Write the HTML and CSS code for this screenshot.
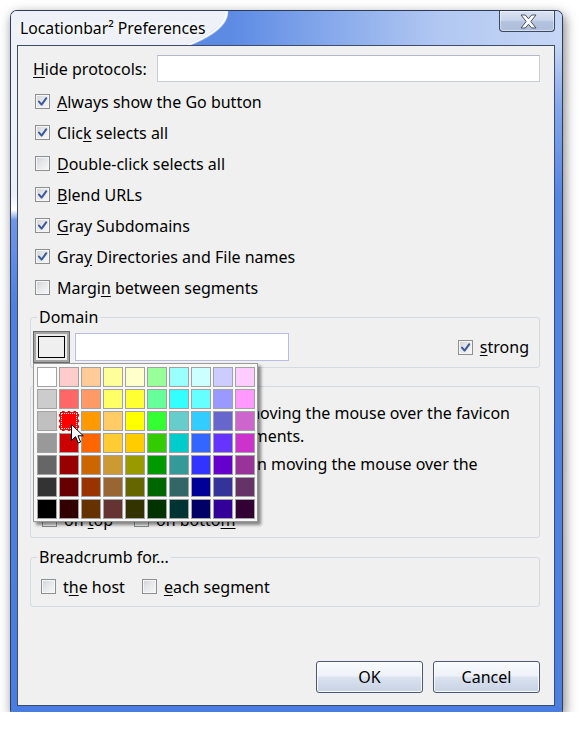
FILE: index.html
```html
<!DOCTYPE html>
<html>
<head>
<meta charset="utf-8">
<title>Locationbar² Preferences</title>
<link rel="stylesheet" href="styles.css">
</head>
<body>
<div class="window">
  <div class="titlebar">
    <div class="glass"></div>
    <span class="title">Locationbar² Preferences</span>
    <div class="close">
      <svg width="17" height="15" viewBox="0 0 17 15"><path d="M1 1h4.4l3.1 3.8L11.6 1H16l-5.2 6.5L16 14h-4.4l-3.1-3.8L5.4 14H1l5.2-6.5z" fill="#fff" stroke="#4b5063" stroke-width="1" stroke-linejoin="round"/></svg>
    </div>
  </div>
  <div class="body-row">
    <div class="side left"></div>
    <div class="client">
      <div class="hide-row">
        <span class="lbl"><u>H</u>ide protocols:</span>
        <div class="textbox wide"></div>
      </div>
      <div class="checks">
        <div class="check"><span class="cb"><svg viewBox="0 0 11 11"><path d="M2 5.6 4.6 8.6 9.3 2.2"/></svg></span><span><u>A</u>lways show the Go button</span></div>
        <div class="check"><span class="cb"><svg viewBox="0 0 11 11"><path d="M2 5.6 4.6 8.6 9.3 2.2"/></svg></span><span>Clic<u>k</u> selects all</span></div>
        <div class="check"><span class="cb"></span><span><u>D</u>ouble-click selects all</span></div>
        <div class="check"><span class="cb"><svg viewBox="0 0 11 11"><path d="M2 5.6 4.6 8.6 9.3 2.2"/></svg></span><span><u>B</u>lend URLs</span></div>
        <div class="check"><span class="cb"><svg viewBox="0 0 11 11"><path d="M2 5.6 4.6 8.6 9.3 2.2"/></svg></span><span><u>G</u>ray Subdomains</span></div>
        <div class="check"><span class="cb"><svg viewBox="0 0 11 11"><path d="M2 5.6 4.6 8.6 9.3 2.2"/></svg></span><span>Gra<u>y</u> Directories and File names</span></div>
        <div class="check"><span class="cb"></span><span>Margi<u>n</u> between segments</span></div>
      </div>

      <fieldset class="group domain">
        <legend>Domain</legend>
        <div class="domain-row">
          <div class="colorwrap">
            <div class="colorbtn"><span class="swatch"></span></div>
            <div class="picker">
              <div class="grid">
                <span class="cell" style="background:#ffffff"></span><span class="cell" style="background:#ffcccc"></span><span class="cell" style="background:#ffcc99"></span><span class="cell" style="background:#ffff99"></span><span class="cell" style="background:#ffffcc"></span><span class="cell" style="background:#99ff99"></span><span class="cell" style="background:#99ffff"></span><span class="cell" style="background:#ccffff"></span><span class="cell" style="background:#ccccff"></span><span class="cell" style="background:#ffccff"></span>
                <span class="cell" style="background:#cccccc"></span><span class="cell" style="background:#ff6666"></span><span class="cell" style="background:#ff9966"></span><span class="cell" style="background:#ffff66"></span><span class="cell" style="background:#ffff33"></span><span class="cell" style="background:#66ff99"></span><span class="cell" style="background:#33ffff"></span><span class="cell" style="background:#66ffff"></span><span class="cell" style="background:#9999ff"></span><span class="cell" style="background:#ff99ff"></span>
                <span class="cell" style="background:#c0c0c0"></span><span class="cell selected" style="background:#ff0000"></span><span class="cell" style="background:#ff9900"></span><span class="cell" style="background:#ffcc66"></span><span class="cell" style="background:#ffff00"></span><span class="cell" style="background:#33ff33"></span><span class="cell" style="background:#66cccc"></span><span class="cell" style="background:#33ccff"></span><span class="cell" style="background:#6666cc"></span><span class="cell" style="background:#cc66cc"></span>
                <span class="cell" style="background:#999999"></span><span class="cell" style="background:#cc0000"></span><span class="cell" style="background:#ff6600"></span><span class="cell" style="background:#ffcc33"></span><span class="cell" style="background:#ffcc00"></span><span class="cell" style="background:#33cc00"></span><span class="cell" style="background:#00cccc"></span><span class="cell" style="background:#3366ff"></span><span class="cell" style="background:#6633ff"></span><span class="cell" style="background:#cc33cc"></span>
                <span class="cell" style="background:#666666"></span><span class="cell" style="background:#990000"></span><span class="cell" style="background:#cc6600"></span><span class="cell" style="background:#cc9933"></span><span class="cell" style="background:#999900"></span><span class="cell" style="background:#009900"></span><span class="cell" style="background:#339999"></span><span class="cell" style="background:#3333ff"></span><span class="cell" style="background:#6600cc"></span><span class="cell" style="background:#993399"></span>
                <span class="cell" style="background:#333333"></span><span class="cell" style="background:#660000"></span><span class="cell" style="background:#993300"></span><span class="cell" style="background:#996633"></span><span class="cell" style="background:#666600"></span><span class="cell" style="background:#006600"></span><span class="cell" style="background:#336666"></span><span class="cell" style="background:#000099"></span><span class="cell" style="background:#333399"></span><span class="cell" style="background:#663366"></span>
                <span class="cell" style="background:#000000"></span><span class="cell" style="background:#330000"></span><span class="cell" style="background:#663300"></span><span class="cell" style="background:#663333"></span><span class="cell" style="background:#333300"></span><span class="cell" style="background:#003300"></span><span class="cell" style="background:#003333"></span><span class="cell" style="background:#000066"></span><span class="cell" style="background:#330099"></span><span class="cell" style="background:#330033"></span>
              </div>
              <svg class="cursor" width="13" height="21" viewBox="0 0 13 21"><path d="M0.5 0.5V16.5L4.5 12.7 7.2 19 9.6 18 7 11.8H12.3Z" fill="#fff" stroke="#000" stroke-width="1" stroke-linejoin="miter"/></svg>
            </div>
          </div>
          <div class="textbox domain-input"></div>
          <div class="check strong"><span class="cb"><svg viewBox="0 0 11 11"><path d="M2 5.6 4.6 8.6 9.3 2.2"/></svg></span><span><u>s</u>trong</span></div>
        </div>
      </fieldset>

      <fieldset class="group popup">
        <legend>Full URL</legend>
        <div class="multi"><span class="cb"></span><span>Show the full URL when moving the mouse over the favicon<br>and over each of the&nbsp; segments.</span></div>
        <div class="multi second"><span class="cb"></span><span>Show path segments when moving the mouse over the<br>path.</span></div>
        <div class="pos-row">
          <div class="check small"><span class="cb"></span><span>on <u>t</u>op</span></div>
          <div class="check small"><span class="cb"></span><span>on botto<u>m</u></span></div>
        </div>
      </fieldset>

      <fieldset class="group crumb">
        <legend>Breadcrumb for...</legend>
        <div class="crumb-row">
          <div class="check small"><span class="cb"></span><span>t<u>h</u>e host</span></div>
          <div class="check small"><span class="cb"></span><span><u>e</u>ach segment</span></div>
        </div>
      </fieldset>

      <div class="buttons">
        <div class="btn">OK</div>
        <div class="btn">Cancel</div>
      </div>
    </div>
    <div class="side right"></div>
  </div>
  <div class="bottom-edge"></div>
</div>
</body>
</html>
```

FILE: styles.css
```css
* { box-sizing: border-box; }
html, body { margin: 0; background: #ffffff; }
body {
  font-family: "Noto Sans", "Open Sans", sans-serif;
  font-size: 16px;
  color: #000;
}
u { text-decoration: underline; text-underline-offset: 2px; }

/* window: caption bar, side edges, bottom edge */
.window {
  width: 551px;
  height: 701px;
  margin: 11px 0 0 11px;
  box-shadow: 0 0 0 1px #2d3b57, 2px 4px 12px 1px rgba(0, 0, 0, 0.5);
  border-radius: 6px 6px 2px 2px;
  display: flex;
  flex-direction: column;
  overflow: hidden;
}

.titlebar {
  position: relative;
  height: 34px;
  flex: none;
  display: flex;
  align-items: flex-start;
  padding-left: 9px;
  overflow: hidden;
  background: linear-gradient(to right, #5b8ae4 0%, #5d8be4 40%, #86a9eb 58%, #b2c8f2 78%, #c6d6f5 100%);
}
/* white glass reflection on the caption's left side */
.glass {
  position: absolute;
  left: 0;
  top: 0;
  width: 215px;
  height: 58px;
  border-bottom-right-radius: 215px 58px;
  background: #eef2f8;
  box-shadow: 1px 1px 1px 1px #ffffff;
}
.title {
  position: relative;
  font-size: 15.75px;
  line-height: 34px;
  color: #000;
  text-shadow: 0 0 8px #fff, 0 0 6px #fff;
}
.close {
  position: relative;
  margin-left: auto;
  margin-right: 7px;
  width: 56px;
  height: 21px;
  border: 1px solid #3b4862;
  border-top: none;
  border-radius: 0 0 4px 4px;
  background: linear-gradient(#dbe3f2 0%, #c9d5ea 45%, #b3c2dd 55%, #aebfdc 100%);
  box-shadow: inset 0 0 0 1px rgba(255, 255, 255, 0.45);
  display: flex;
  align-items: center;
  justify-content: center;
}
.close svg { margin-left: 2px; }

.body-row {
  flex: 1;
  display: flex;
  min-height: 0;
}
.side { flex: none; }
.side.left {
  width: 6px;
  background: linear-gradient(#eef2f8 0px, #ebf0f7 150px, #ffffff 165px, #6e97e6 175px, #4f81e2 260px, #4a7de1 100%);
}
.side.right {
  width: 7px;
  background: linear-gradient(#c6d6f5 0px, #86a8eb 60px, #5585e3 150px, #4c7fe2 100%);
}
.bottom-edge {
  height: 6px;
  flex: none;
  background: #4a7de1;
}

.client {
  flex: 1;
  border: 1px solid #3f4c68;
  background: #f0f0f0;
  padding: 9px 14px 12px 12px;
  display: flex;
  flex-direction: column;
}

.hide-row {
  display: flex;
  align-items: center;
  height: 27px;
  padding-left: 3px;
  gap: 10px;
}
.textbox {
  background: #fff;
  border: 1px solid #c6ccd8;
  border-top-color: #b3b8c6;
}
.wide { flex: 1; height: 27px; }

.checks {
  margin-top: 4px;
  padding-left: 5px;
}
.check {
  display: flex;
  align-items: center;
  gap: 7px;
  height: 31px;
}
.cb {
  width: 15px;
  height: 15px;
  flex: none;
  border: 1px solid #8e8f8f;
  background: linear-gradient(135deg, #cfd2d6 0%, #e6e7e9 45%, #f8f8f8 100%);
  box-shadow: inset 0 0 0 1px #f6f6f6;
  display: flex;
  align-items: center;
  justify-content: center;
}
.cb svg { width: 11px; height: 11px; }
.cb svg path { fill: none; stroke: #3a5a9c; stroke-width: 2; stroke-linecap: round; stroke-linejoin: round; }

.group {
  margin: 0;
  border: 1px solid #d3dae2;
  border-radius: 3px;
  min-width: 0;
}
.group legend {
  margin-left: 4px;
  padding: 0 2px;
  line-height: 20px;
}
.popup legend, .crumb legend { margin-left: -4px; }

.domain { margin-top: 4px; padding: 4px 10px 4px 2px; }
.domain-row { display: flex; align-items: center; }
.colorwrap { position: relative; flex: none; }
.colorbtn {
  width: 37px;
  height: 32px;
  border: 1px solid #6a6a6a;
  box-shadow: inset 0 0 0 2px #a4a4a4;
  background: #ececec;
  display: flex;
  align-items: center;
  justify-content: center;
}
.swatch { width: 27px; height: 22px; border: 1px solid #000; background: #efefef; }
.domain-input { width: 214px; height: 28px; margin-left: 5px; border-color: #b9bde6; }
.strong { margin-left: auto; height: 28px; }

.picker {
  position: absolute;
  left: 0;
  top: 100%;
  z-index: 10;
  background: #f7f7f7;
  border: 1px solid #9a9a9a;
  box-shadow: 3px 3px 3px rgba(0, 0, 0, 0.45);
  padding: 3px 2px 2px 3px;
}
.grid {
  display: grid;
  grid-template-columns: repeat(10, 20px);
  grid-auto-rows: 20px;
  gap: 2px;
}
.cell { border: 1px solid #a2a2a2; }
.cell.selected { border: 1px dashed #ffffff; outline: 1px dotted #ffffff; outline-offset: -3px; }
.cursor { position: absolute; left: 37px; top: 60px; }

.popup { margin-top: 8px; padding: 6px 10px 6px 10px; }
.multi { display: flex; align-items: flex-start; gap: 8px; line-height: 23px; white-space: nowrap; }
.multi .cb { margin-top: 4px; }
.multi.second { margin-top: 5px; }
.pos-row { display: flex; gap: 21px; margin-top: 9px; padding-left: 1px; }
.check.small { height: 23px; }

.crumb { margin-top: 9px; padding: 8px 10px 8px 10px; }
.crumb-row { display: flex; gap: 17px; }

.buttons {
  margin-top: auto;
  display: flex;
  justify-content: flex-end;
  gap: 10px;
}
.btn {
  width: 107px;
  height: 32px;
  border: 1px solid #4a5876;
  border-radius: 3px;
  background: linear-gradient(#f8fafd 0%, #eef2f8 46%, #dae2ef 52%, #c8d2e3 100%);
  box-shadow: inset 0 0 0 1px rgba(255, 255, 255, 0.85);
  display: flex;
  align-items: center;
  justify-content: center;
}
```
